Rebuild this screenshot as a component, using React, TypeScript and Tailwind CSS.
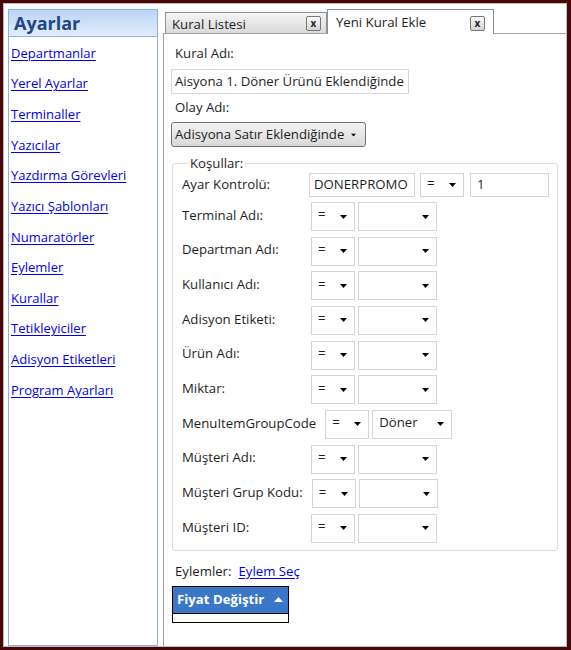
import React from 'react';

const MENU = [
    'Departmanlar',
    'Yerel Ayarlar',
    'Terminaller',
    'Yazıcılar',
    'Yazdırma Görevleri',
    'Yazıcı Şablonları',
    'Numaratörler',
    'Eylemler',
    'Kurallar',
    'Tetikleyiciler',
    'Adisyon Etiketleri',
    'Program Ayarları'
];

const KOSULLAR = [
    { label: 'Terminal Adı:', value: '' },
    { label: 'Departman Adı:', value: '' },
    { label: 'Kullanıcı Adı:', value: '' },
    { label: 'Adisyon Etiketi:', value: '' },
    { label: 'Ürün Adı:', value: '' },
    { label: 'Miktar:', value: '' },
    { label: 'MenuItemGroupCode', value: 'Döner' },
    { label: 'Müşteri Adı:', value: '' },
    { label: 'Müşteri Grup Kodu:', value: '' },
    { label: 'Müşteri ID:', value: '' }
];

const Caret = ({ className = '' }: { className?: string }) => (
    <svg width="7" height="4" viewBox="0 0 7 4" className={className}>
        <path d="M0 0 L7 0 L3.5 4 Z" fill="#000" />
    </svg>
);

const Combo = ({ value, width }: { value: string; width: string }) => (
    <div className={`${width} h-full bg-white border border-[#d4d4d4] flex items-center justify-between pl-[6px] pr-[7px]`}>
        <span className="leading-none -mt-[3px]">{value}</span>
        <Caret />
    </div>
);

export default function App() {
    return (
        <div
            className="w-[571px] h-[650px] border-t-[3px] border-l-[3px] border-b-[3px] border-r-[4px] border-[#4a0707] bg-white text-[13.2px] text-[#1e1e1e]"
            style={{ fontFamily: '"Open Sans", "Noto Sans", sans-serif' }}
        >
            <div className="w-full h-full border border-[#bdbdbd] flex pl-[4px] pt-[5px]">
                {/* sol menü */}
                <aside className="w-[150px] h-full border border-[#8db1e2] flex flex-col shrink-0">
                    <div className="h-[27px] border-b border-[#8db1e2] bg-gradient-to-b from-[#bcd4f5] to-[#e1ecfb] flex items-center pl-[5px]">
                        <span className="text-[18px] font-bold text-[#1c4686] leading-none">Ayarlar</span>
                    </div>
                    <ul className="pl-[2px] pt-[1px] text-[13px]">
                        {MENU.map(m => (
                            <li key={m} className="h-[30.64px] flex items-center">
                                <a href="#" className="text-[#0000ee] underline underline-offset-2 leading-none">{m}</a>
                            </li>
                        ))}
                    </ul>
                </aside>

                {/* sekmeler + içerik */}
                <main className="ml-[5px] flex-1 flex flex-col">
                    <div className="h-[24px] flex items-end pl-[2px]">
                        <div className="w-[162px] h-[21px] border border-b-0 border-[#8e9096] bg-gradient-to-b from-[#f4f4f4] to-[#dadada] flex items-center justify-between pl-[6px] pr-[5px]">
                            <span className="mt-[3px]">Kural Listesi</span>
                            <span className="w-[15px] h-[15px] border border-[#777] rounded-[2px] bg-gradient-to-b from-[#fafafa] to-[#d4d4d4] text-[10px] font-bold flex items-center justify-center leading-none">x</span>
                        </div>
                        <div className="relative z-10 w-[167px] h-[25px] -mb-[1px] border border-b-0 border-[#8e9096] bg-white flex items-center justify-between pl-[8px] pr-[8px] pt-[2px]">
                            <span>Yeni Kural Ekle</span>
                            <span className="w-[15px] h-[15px] border border-[#777] rounded-[2px] bg-gradient-to-b from-[#fafafa] to-[#d4d4d4] text-[10px] font-bold flex items-center justify-center leading-none">x</span>
                        </div>
                    </div>

                    <div className="flex-1 border-l border-t border-[#a2a2a2] pl-[7px] pt-[8px] flex flex-col">
                        <div className="h-[24px] flex items-center pl-[4px]">Kural Adı:</div>
                        <div className="mt-[3px] w-[238px] h-[25px] border border-[#d6d6d6] flex items-center pl-[3px] whitespace-nowrap overflow-hidden">
                            Aisyona 1. Döner Ürünü Eklendiğinde
                        </div>
                        <div className="mt-[2px] h-[24px] flex items-center pl-[4px]">Olay Adı:</div>
                        <div className="mt-[2px] w-[195px] h-[25px] border border-[#707070] rounded-[3px] bg-gradient-to-b from-[#f3f3f3] to-[#d9d9d9] flex items-center justify-between pl-[3px] pr-[8px] whitespace-nowrap">
                            <span>Adisyona Satır Eklendiğinde</span>
                            <Caret className="scale-75" />
                        </div>

                        <fieldset className="mt-[8px] ml-[1px] w-[386px] border border-[#d3dde3] rounded-[3px] pl-[9px] pb-[7px]">
                            <legend className="ml-[6px] px-[2px] leading-[16px]">Koşullar:</legend>
                            <div className="mt-[2px] h-[24px] flex items-center">
                                <span className="min-w-[127px] pr-[9px]">Ayar Kontrolü:</span>
                                <div className="w-[106px] h-full border border-[#d4d4d4] flex items-center pl-[4px]">DONERPROMO</div>
                                <div className="ml-[5px] h-full">
                                    <Combo value="=" width="w-[44px]" />
                                </div>
                                <div className="ml-[6px] w-[79px] h-full border border-[#d4d4d4] flex items-center pl-[6px]">1</div>
                            </div>
                            <div className="mt-[5px] flex flex-col gap-[5.67px]">
                                {KOSULLAR.map(k => (
                                    <div key={k.label} className="h-[29px] flex items-center">
                                        <span className="min-w-[129px] pr-[9px] -mt-[2px] whitespace-nowrap">{k.label}</span>
                                        <div className="h-full flex gap-[3px]">
                                            <Combo value="=" width="w-[44px]" />
                                            <Combo value={k.value} width={k.value ? 'w-[80px]' : 'w-[79px]'} />
                                        </div>
                                    </div>
                                ))}
                            </div>
                        </fieldset>

                        <div className="mt-[11px] h-[20px] flex items-center pl-[4px] gap-[7px]">
                            <span>Eylemler:</span>
                            <a href="#" className="text-[#0000ee] underline underline-offset-2">Eylem Seç</a>
                        </div>
                        <div className="mt-[4px] ml-[1px] w-[117px] border border-black">
                            <div className="h-[27px] bg-[#3a77c8] border-b border-black flex items-center justify-between pl-[4px] pr-[5px]">
                                <span className="text-white font-bold">Fiyat Değiştir</span>
                                <svg width="9" height="5" viewBox="0 0 9 5">
                                    <path d="M0 5 L9 5 L4.5 0 Z" fill="#fff" />
                                </svg>
                            </div>
                            <div className="h-[8px] bg-white"></div>
                        </div>
                    </div>
                </main>
            </div>
        </div>
    );
}
